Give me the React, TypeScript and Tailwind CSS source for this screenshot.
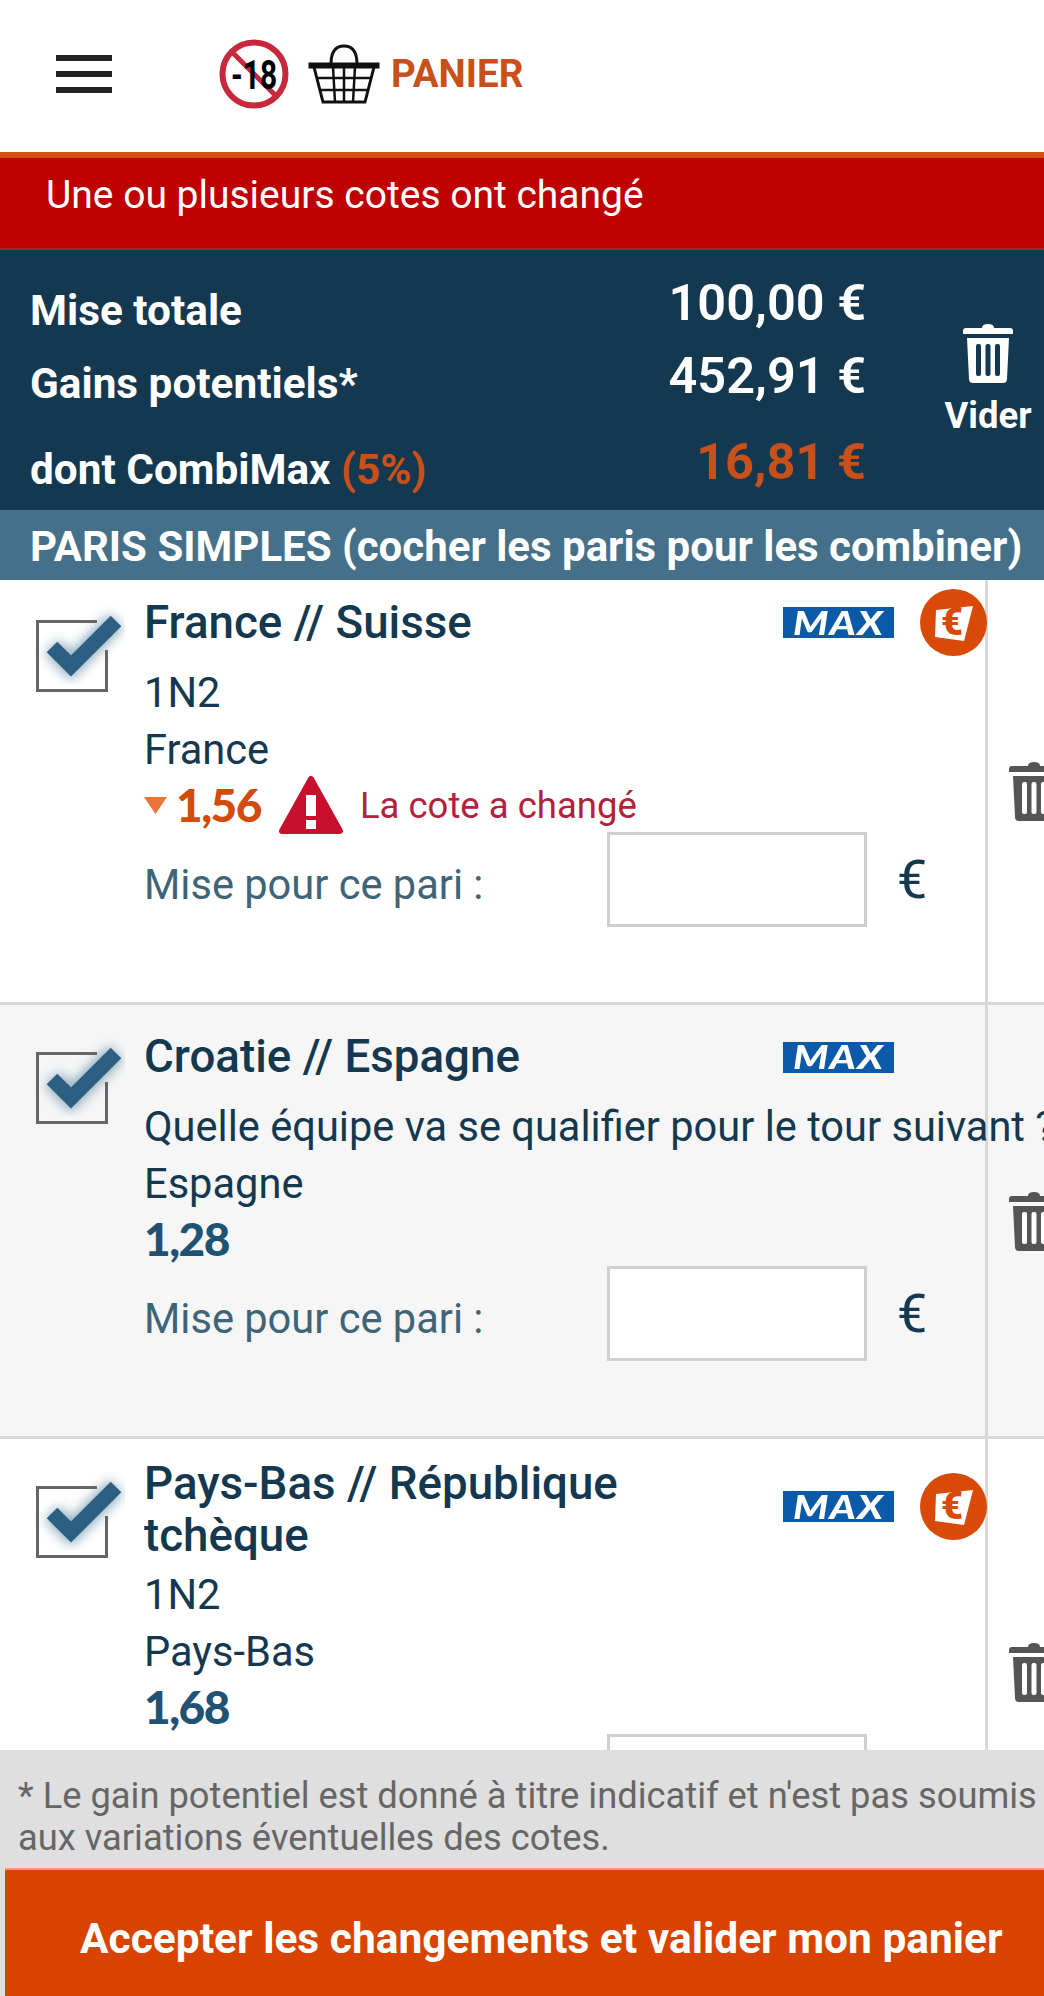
import React from "react";

// Shared drawings
const TrashIcon = ({ body, slot }: { body: string; slot: string }) => (
	<svg width="50" height="60" viewBox="0 0 50 60" className="shrink-0">
		<path d="M19 5 Q19 1 25 1 Q31 1 31 5 L47 5 Q50 5 50 8 L50 11 L0 11 L0 8 Q0 5 3 5 Z" fill={body} />
		<path d="M4 15 L46 15 L44 56 Q44 60 40 60 L10 60 Q6 60 6 56 Z" fill={body} />
		<rect x="13" y="21" width="5" height="32" rx="2" fill={slot} />
		<rect x="22.5" y="21" width="5" height="32" rx="2" fill={slot} />
		<rect x="32" y="21" width="5" height="32" rx="2" fill={slot} />
	</svg>
);

const CheckBox = () => (
	<svg width="96" height="100" viewBox="0 0 96 100" className="block">
		<defs>
			<filter id="check-blur" x="-40%" y="-40%" width="180%" height="180%">
				<feGaussianBlur stdDeviation="6" />
			</filter>
		</defs>
		<path d="M23 47 L42 66 L87 21" fill="none" stroke="#5f8aa6" strokeWidth="20" opacity="0.7" filter="url(#check-blur)" />
		<path d="M68 21.5 L8.5 21.5 L8.5 90.5 L77.5 90.5 L77.5 50" fill="none" stroke="#666666" strokeWidth="3" />
		<path d="M23 47 L42 66 L87 21" fill="none" stroke="#2d5f82" strokeWidth="15" />
	</svg>
);

const MaxBadge = () => (
	<div className="flex h-[31px] w-[111px] shrink-0 items-center justify-center bg-[#0a5aa8] font-[Lato,sans-serif] text-[32px] font-black italic leading-none text-white">
		<span className="inline-block scale-x-125 tracking-[1px]">MAX</span>
	</div>
);

const EuroBadge = () => (
	<svg width="67" height="67" viewBox="0 0 67 67" className="relative z-10 ml-[26px] shrink-0">
		<circle cx="33.5" cy="33.5" r="33.5" fill="#d94a08" />
		<path d="M16 21 L53 17 L44 52 L15 48 Z" fill="#ffffff" />
		<text x="32" y="46" textAnchor="middle" fontFamily="Roboto, sans-serif" fontWeight="900" fontSize="38" fill="#d94a08">
			€
		</text>
	</svg>
);

type BetProps = {
	title: string;
	market: string;
	pick: string;
	odds: string;
	changed?: boolean;
	bonus?: boolean;
	shaded?: boolean;
	badgeUp?: boolean;
	checkTop: string;
	titleTop: string;
	marketTop: string;
};

const BetRow = ({ title, market, pick, odds, changed, bonus, shaded, badgeUp, checkTop, titleTop, marketTop }: BetProps) => (
	<div className={`flex shrink-0 border-b-[3px] border-[#d8d8d8] ${shaded ? "bg-[#f6f6f6]" : "bg-white"}`}>
		<div className="flex w-[988px] shrink-0 border-r-[3px] border-[#d8d8d8]">
			<div className={`w-[144px] shrink-0 pl-[29px] ${checkTop}`}>
				<CheckBox />
			</div>
			<div className={`min-w-0 flex-1 pb-[75px] ${titleTop}`}>
				<div className="flex items-center">
					<div className="w-[639px] shrink-0 pr-[40px] text-[45.7px] font-medium leading-[52px] text-[#14384f]">{title}</div>
					<div className={`flex items-center ${badgeUp ? "mb-[7px]" : ""}`}>
						<MaxBadge />
						{bonus && <EuroBadge />}
					</div>
				</div>
				<div className={`whitespace-nowrap text-[41.6px] leading-[57px] text-[#14384f] ${marketTop}`}>{market}</div>
				<div className="text-[41.6px] leading-[57px] text-[#14384f]">{pick}</div>
				<div className="flex h-[54px] items-center">
					{changed && (
						<svg width="23" height="17" viewBox="0 0 23 17" className="mr-[9px] shrink-0">
							<path d="M0 0 L23 0 L11.5 17 Z" fill="#e8743a" />
						</svg>
					)}
					<span className={`font-[Lato,sans-serif] text-[46px] font-black leading-none tracking-[-1.5px] ${changed ? "text-[#d24d0c]" : "text-[#1f5273]"}`}>
						{odds}
					</span>
					{changed && (
						<>
							<svg width="66" height="60" viewBox="0 0 66 60" className="ml-[17px] shrink-0">
								<path d="M33 4 L62 56 L4 56 Z" fill="#c8102e" stroke="#c8102e" strokeWidth="6" strokeLinejoin="round" />
								<rect x="28" y="20" width="10" height="21" fill="#ffffff" />
								<rect x="28" y="45" width="10" height="9" fill="#ffffff" />
							</svg>
							<span className="ml-[16px] pt-[3px] text-[36.5px] leading-none text-[#b3213b]">La cote a changé</span>
						</>
					)}
				</div>
				<div className="flex items-center">
					<div className="w-[463px] shrink-0 pt-[10px] text-[41.6px] leading-[57px] text-[#3e6478]">Mise pour ce pari :</div>
					<input className="h-[95px] w-[260px] shrink-0 border-[3px] border-[#cfcfcf] bg-white" />
					<div className="ml-[30px] text-[54px] leading-none text-[#14384f]">€</div>
				</div>
			</div>
		</div>
		<div className="flex w-[56px] shrink-0 items-center overflow-hidden pl-[21px]">
			<TrashIcon body="#555555" slot="#ffffff" />
		</div>
	</div>
);

const App = () => {
	return (
		<div className="flex h-[1996px] w-[1044px] flex-col overflow-hidden bg-white font-[Roboto,sans-serif]">
			{/* Header */}
			<div className="flex h-[152px] shrink-0 items-center pb-[4px] pl-[56px]">
				<div className="flex w-[56px] flex-col gap-[10px]">
					<div className="h-[6px] bg-[#222222]" />
					<div className="h-[6px] bg-[#222222]" />
					<div className="h-[6px] bg-[#222222]" />
				</div>
				<svg width="70" height="70" viewBox="0 0 70 70" className="ml-[107px] shrink-0">
					<circle cx="35" cy="35" r="31.5" fill="#ffffff" stroke="#c8283c" strokeWidth="6" />
					<line x1="13" y1="13" x2="57" y2="57" stroke="#c8283c" strokeWidth="5" />
					<text x="35" y="50" textAnchor="middle" fontFamily="Roboto, sans-serif" fontWeight="700" fontSize="41" textLength="46" lengthAdjust="spacingAndGlyphs" fill="#000000">
						-18
					</text>
				</svg>
				<svg width="72" height="60" viewBox="0 0 72 60" className="ml-[19px] shrink-0">
					<g fill="none" stroke="#111111" strokeWidth="3">
						<path d="M23 20 Q23 2 36 2 Q49 2 49 20" />
						<path d="M2 20 L70 20 L70 23 L2 23 Z" />
						<path d="M6 23 L15 58 L57 58 L66 23" />
						<path d="M8 34 L64 34 M11 46 L61 46 M25 23 L27 58 M36 23 L36 58 M47 23 L45 58" strokeWidth="2.5" />
					</g>
				</svg>
				<div className="ml-[11px] text-[38.5px] font-bold leading-none text-[#c8501a]">PANIER</div>
			</div>

			{/* Alert */}
			<div className="flex h-[98px] shrink-0 items-center border-t-[6px] border-b-2 border-t-[#d4500f] border-b-[#a8202a] bg-[#bf0000] pb-[16px] pl-[46px] text-[39px] text-white">
				Une ou plusieurs cotes ont changé
			</div>

			{/* Totals */}
			<div className="flex h-[260px] shrink-0 bg-[#14384f] pl-[30px] text-white">
				<div className="w-[836px] shrink-0 pt-[16px]">
					<div className="flex h-[73px] items-center justify-between">
						<span className="pt-[16px] text-[42.3px] font-bold">Mise totale</span>
						<span className="text-[50.5px] font-semibold">100,00 €</span>
					</div>
					<div className="flex h-[73px] items-center justify-between">
						<span className="pt-[16px] text-[42.3px] font-bold">Gains potentiels*</span>
						<span className="text-[50.5px] font-semibold">452,91 €</span>
					</div>
					<div className="mt-[13px] flex h-[73px] items-center justify-between">
						<span className="pt-[16px] text-[42.3px] font-bold">
							dont CombiMax <span className="text-[#c8501a]">(5%)</span>
						</span>
						<span className="text-[50.5px] font-bold text-[#c8501a]">16,81 €</span>
					</div>
				</div>
				<div className="ml-[80px] flex w-[84px] shrink-0 flex-col items-center pt-[73px]">
					<TrashIcon body="#ffffff" slot="#14384f" />
					<div className="mt-[12px] text-[36.5px] font-bold leading-[42px]">Vider</div>
				</div>
			</div>

			{/* Section title */}
			<div className="flex h-[70px] shrink-0 items-center whitespace-nowrap bg-[#44708a] pl-[30px] pt-[3px] text-[42px] font-bold text-white">
				PARIS SIMPLES (cocher les paris pour les combiner)
			</div>

			{/* Bets */}
			<div className="flex min-h-0 flex-1 flex-col overflow-hidden">
				<BetRow
					title="France // Suisse"
					market="1N2"
					pick="France"
					odds="1,56"
					changed
					bonus
					checkTop="pt-[20px]"
					titleTop="pt-[9px]"
					marketTop="mt-[8px]"
				/>
				<BetRow
					title="Croatie // Espagne"
					market="Quelle équipe va se qualifier pour le tour suivant ?"
					pick="Espagne"
					odds="1,28"
					shaded
					checkTop="pt-[27px]"
					titleTop="pt-[26px]"
					marketTop="mt-[15px]"
				/>
				<BetRow
					title="Pays-Bas // République tchèque"
					market="1N2"
					pick="Pays-Bas"
					odds="1,68"
					bonus
					badgeUp
					checkTop="pt-[27px]"
					titleTop="pt-[19px]"
					marketTop="mt-[4px]"
				/>
			</div>

			{/* Footer */}
			<div className="shrink-0 bg-[#dfdfdf]">
				<div className="h-[118px] whitespace-nowrap px-[18px] pt-[25px] text-[36.3px] leading-[42px] text-[#666666]">
					* Le gain potentiel est donné à titre indicatif et n'est pas soumis
					<br />
					aux variations éventuelles des cotes.
				</div>
				<div className="ml-[5px] flex h-[128px] items-center border-t-2 border-[#ef9a78] bg-[#d94300] pt-[12px] pl-[75px] text-[42.5px] font-bold text-white">
					Accepter les changements et valider mon panier
				</div>
			</div>
		</div>
	);
};

export default App;
